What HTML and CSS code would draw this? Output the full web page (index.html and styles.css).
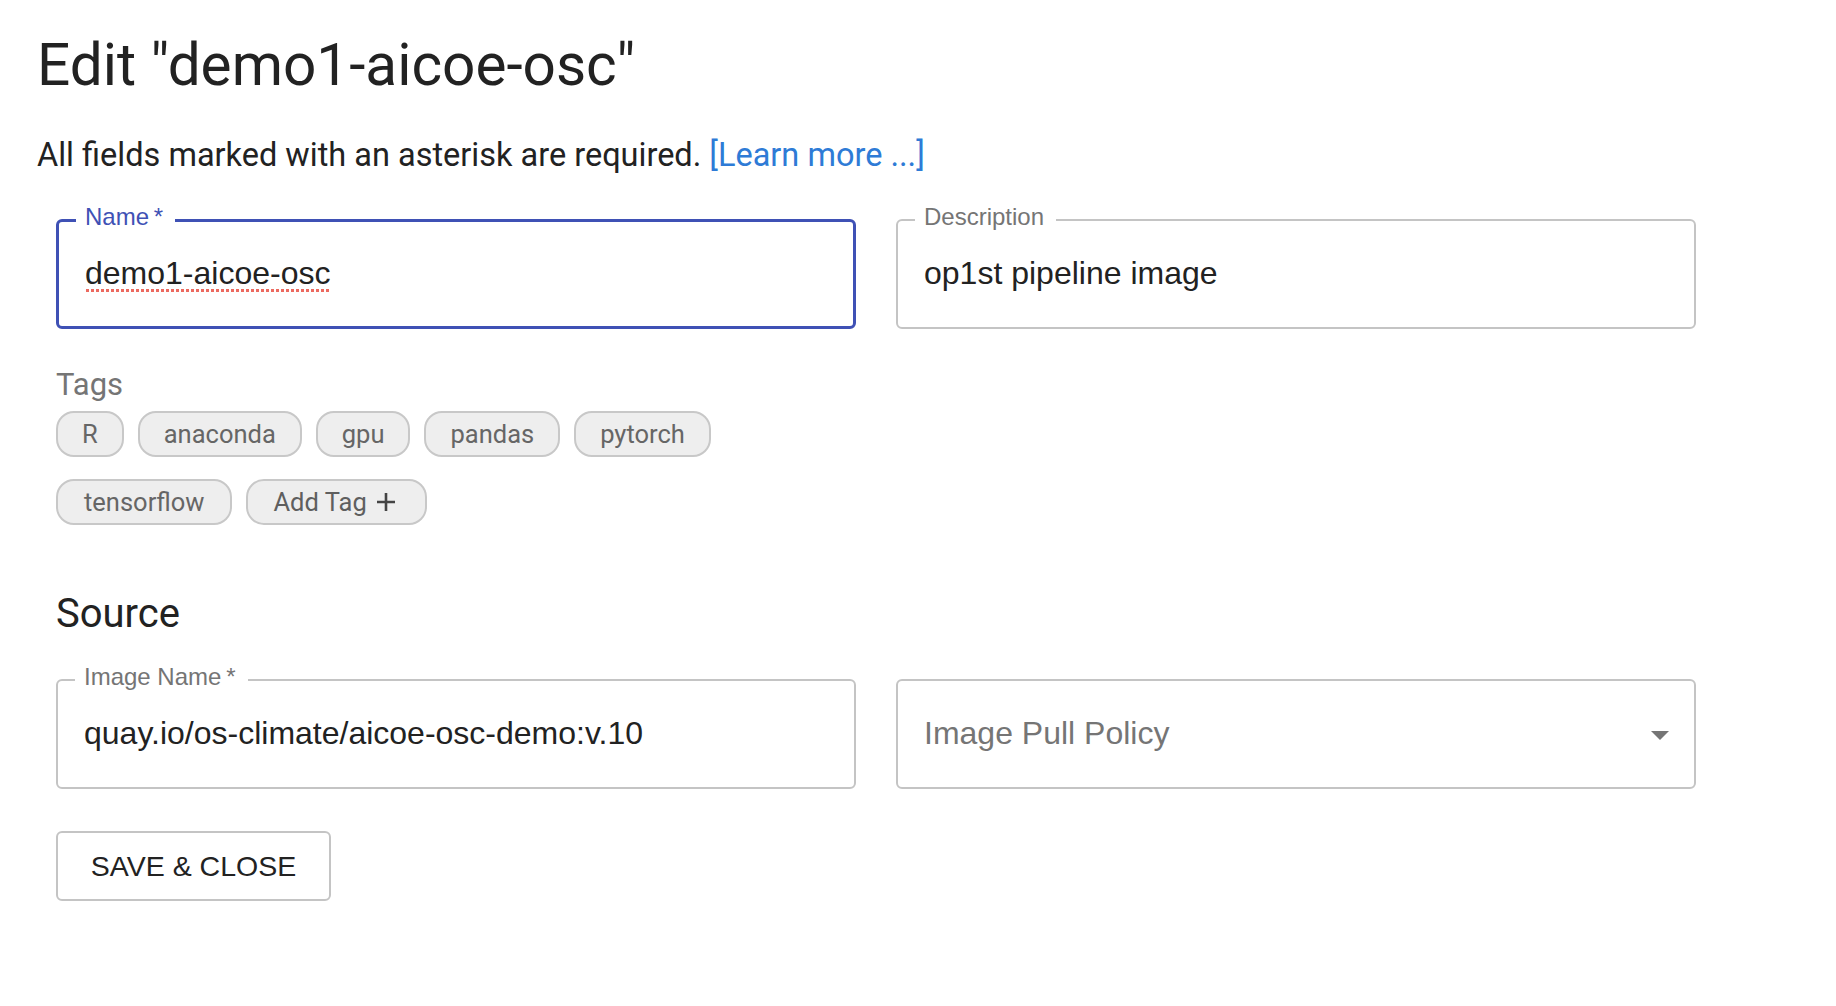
FILE: index.html
```html
<!DOCTYPE html>
<html lang="en">
<head>
<meta charset="utf-8">
<title>Edit "demo1-aicoe-osc"</title>
<link rel="stylesheet" href="styles.css">
</head>
<body>
<main class="page">
  <h1 class="title">Edit "demo1-aicoe-osc"</h1>
  <p class="intro">All fields marked with an asterisk are required. <a class="link" href="#">[Learn more ...]</a></p>
  <form class="form">
    <div class="row">
      <div class="field field--focused">
        <span class="field-label">Name&thinsp;*</span>
        <div class="field-value"><span class="spell">demo1-aicoe-osc</span></div>
      </div>
      <div class="field">
        <span class="field-label">Description</span>
        <div class="field-value">op1st pipeline image</div>
      </div>
    </div>

    <div class="tags">
      <div class="tags-label">Tags</div>
      <div class="chips">
        <span class="chip">R</span>
        <span class="chip">anaconda</span>
        <span class="chip">gpu</span>
        <span class="chip">pandas</span>
        <span class="chip">pytorch</span>
        <span class="chip chip--wide">tensorflow</span>
        <span class="chip chip--add">Add Tag
          <svg class="plus" width="20" height="20" viewBox="0 0 20 20" aria-hidden="true"><path d="M10 1v18M1 10h18" stroke="#444" stroke-width="2.6" fill="none"/></svg>
        </span>
      </div>
    </div>

    <h2 class="section">Source</h2>

    <div class="row">
      <div class="field">
        <span class="field-label">Image Name&thinsp;*</span>
        <div class="field-value">quay.io/os-climate/aicoe-osc-demo:v.10</div>
      </div>
      <div class="field field--select">
        <div class="field-value field-placeholder">Image Pull Policy</div>
        <svg class="arrow" width="18" height="9" viewBox="0 0 18 9" aria-hidden="true"><path d="M0 0h18L9 9z" fill="#757575"/></svg>
      </div>
    </div>

    <button type="button" class="btn">SAVE &amp; CLOSE</button>
  </form>
</main>
</body>
</html>
```

FILE: styles.css
```css
html, body {
  margin: 0;
  background: #ffffff;
}

.page {
  padding: 31px 0 0 37px;
  font-family: Roboto, "Noto Sans", sans-serif;
  color: #222222;
}

.title {
  margin: 0;
  font-size: 58.5px;
  line-height: 68px;
  font-weight: 400;
  color: #222222;
}

.intro {
  margin: 37px 0 0;
  font-size: 32.5px;
  line-height: 38px;
  color: #222222;
}

.link {
  color: #2e7bd6;
  text-decoration: none;
}

.form {
  margin: 45px 0 0 19px;
}

.row {
  display: flex;
  gap: 40px;
}

.field {
  position: relative;
  box-sizing: border-box;
  width: 800px;
  height: 110px;
  border: 2px solid #c4c4c4;
  border-radius: 6px;
  padding: 0 24px 3px 26px;
  display: flex;
  align-items: center;
  font-family: "Liberation Sans", Arial, sans-serif;
}

.field--focused {
  border: 3px solid #3f51b5;
  padding-left: 26px;
}

.field-label {
  position: absolute;
  top: -16px;
  left: 17px;
  padding: 0 12px 0 9px;
  background: #ffffff;
  font-size: 24px;
  line-height: 24px;
  color: #757575;
}

.field--focused .field-label {
  top: -17px;
  color: #3f51b5;
}

.field-value {
  font-size: 32px;
  line-height: 40px;
  color: #222222;
  white-space: nowrap;
}

.field-placeholder {
  color: #757575;
}

.spell {
  background-image: radial-gradient(circle, #ec6a60 1.5px, rgba(236, 106, 96, 0) 2px);
  background-size: 5px 5px;
  background-repeat: repeat-x;
  background-position: 0 100%;
  padding-bottom: 2px;
}

.arrow {
  margin: 6px 1px 0 auto;
  display: block;
}

.tags {
  margin-top: 38px;
}

.tags-label {
  font-size: 31px;
  line-height: 36px;
  color: #757575;
}

.chips {
  margin-top: 8px;
  width: 800px;
  display: flex;
  flex-wrap: wrap;
  column-gap: 14px;
  row-gap: 22px;
}

.chip {
  box-sizing: border-box;
  height: 46px;
  padding: 0 24px;
  border: 2px solid #c8c8c8;
  border-radius: 18px;
  background: #eeeeee;
  display: inline-flex;
  align-items: center;
  font-size: 25.5px;
  color: #666666;
  white-space: nowrap;
}

.chip--wide {
  padding: 0 26px;
}

.chip--add {
  padding: 0 29px 0 25px;
  color: #5f5f5f;
}

.plus {
  margin-left: 9px;
  display: block;
}

.section {
  margin: 66px 0 0;
  font-size: 40px;
  line-height: 46px;
  font-weight: 400;
  color: #222222;
}

.section + .row {
  margin-top: 42px;
}

.btn {
  margin-top: 42px;
  box-sizing: border-box;
  width: 275px;
  height: 70px;
  border: 2px solid #c4c4c4;
  border-radius: 6px;
  background: #ffffff;
  font-family: "Liberation Sans", Arial, sans-serif;
  font-size: 28.5px;
  color: #222222;
  display: flex;
  align-items: center;
  justify-content: center;
  padding: 0;
  cursor: pointer;
}
```
